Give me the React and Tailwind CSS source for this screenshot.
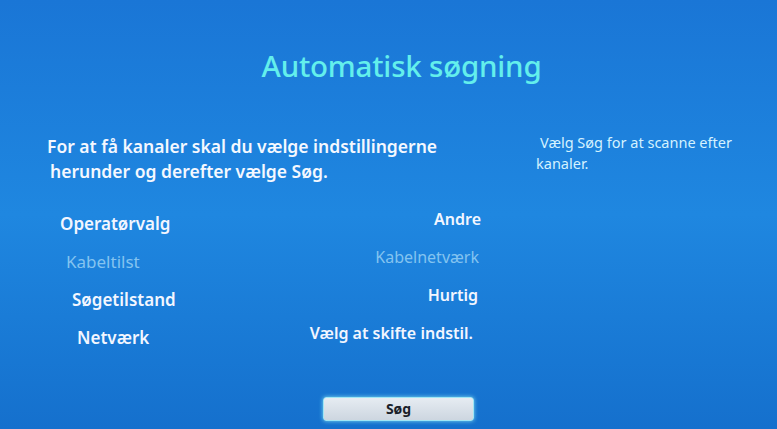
const rows = [
  { label: 'Operatørvalg', value: 'Andre', pl: 'pl-[60px]', mr: 'mr-[55px]', dim: false },
  { label: 'Kabeltilst', value: 'Kabelnetværk', pl: 'pl-[66px]', mr: 'mr-[57px]', dim: true },
  { label: 'Søgetilstand', value: 'Hurtig', pl: 'pl-[72px]', mr: 'mr-[58px]', dim: false },
  { label: 'Netværk', value: 'Vælg at skifte indstil.', pl: 'pl-[77px]', mr: 'mr-[63px]', dim: false },
];

export default function App() {
  return (
    <div
      className="w-full h-[429px] overflow-hidden bg-gradient-to-b from-[#1a76d6] via-[#1f87e0] to-[#1570cd] text-white"
      style={{ fontFamily: '"Noto Sans", "Open Sans", sans-serif' }}
    >
      {/* Title */}
      <div className="pt-[46px] pl-[26px] text-center">
        <h1 className="text-[29.5px] leading-[40px] text-[#63efec] font-medium tracking-[-0.2px]">
          Automatisk søgning
        </h1>
      </div>

      <div className="flex mt-[48px]">
        {/* Left column */}
        <div className="w-[536px] shrink-0">
          <p className="pl-[47px] text-[17.5px] leading-[25px] font-semibold text-[#f4f8ff]">
            For at få kanaler skal du vælge indstillingerne
            <br />
            <span className="pl-[3px]">herunder og derefter vælge Søg.</span>
          </p>

          <div className="mt-[24px] flex flex-col">
            {rows.map((r) => (
              <div key={r.label} className="h-[38px] flex justify-between items-start">
                <span
                  className={`${r.pl} pt-[5px] text-[17px] leading-[22px] ${
                    r.dim ? 'text-[#84c4f0] font-normal' : 'text-[#f2f6ff] font-semibold'
                  }`}
                >
                  {r.label}
                </span>
                <span
                  className={`${r.mr} text-[16px] leading-[22px] ${
                    r.dim ? 'text-[#84c4f0] font-normal' : 'text-[#f2f6ff] font-semibold'
                  }`}
                >
                  {r.value}
                </span>
              </div>
            ))}
          </div>
        </div>

        {/* Help text */}
        <div className="-mt-[2px] pr-[20px] text-[14.5px] leading-[21px] text-[#d4f2ff]">
          <p className="pl-[4px]">Vælg Søg for at scanne efter</p>
          <p>kanaler.</p>
        </div>
      </div>

      {/* Button */}
      <div className="flex justify-center pl-[20px] mt-[37px]">
        <button className="w-[151px] h-[24px] rounded-[3px] border border-[#9fe6f4] bg-gradient-to-b from-[#e6ecf2] to-[#cdd6e0] text-[14px] font-bold text-[#1a1f2a] shadow-[0_0_4px_#7fdcf0] leading-none">
          Søg
        </button>
      </div>
    </div>
  );
}
